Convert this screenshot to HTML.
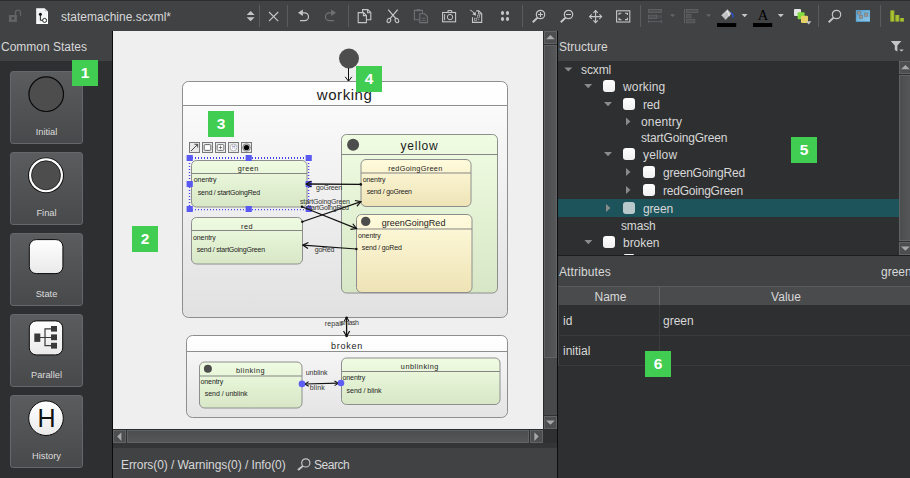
<!DOCTYPE html>
<html lang="en">
<head>
<meta charset="utf-8">
<title>statemachine.scxml</title>
<style>
html,body{margin:0;padding:0;background:#404244;}
body{width:910px;height:478px;overflow:hidden;background:#404244;position:relative;
 font-family:"Liberation Sans",sans-serif;font-size:12px;color:#d8d8d8;}
.abs{position:absolute;}
.t{position:absolute;white-space:pre;line-height:16px;height:16px;}
/* panels */
#topline{left:0;top:0;width:910px;height:1px;background:#2c2d2e;}
#leftbg{left:0;top:61px;width:112px;height:417px;background:#2e2f30;}
#vline1{left:112px;top:31px;width:1px;height:447px;background:#0c0c0c;}
#canvas{left:113px;top:31px;width:430px;height:398px;background:#efefef;}
#cvr{left:543px;top:31px;width:1px;height:413px;background:#2a2b2c;}
#cvb{left:113px;top:429px;width:431px;height:1px;background:#2a2b2c;}
#band{left:113px;top:443px;width:444px;height:5px;background:#343537;}
#corner{left:543px;top:429px;width:14px;height:14px;background:#2f3032;}
#vline2{left:557px;top:31px;width:1px;height:447px;background:#0e0e0e;}
#treebg{left:558px;top:61px;width:352px;height:194px;background:#2e2f30;}
#treeline{left:558px;top:255px;width:352px;height:1px;background:#1c1d1e;}
#attrbg{left:558px;top:305px;width:352px;height:173px;background:#2e2f30;}
#thead{left:558px;top:286px;width:352px;height:19px;background:#4a4b4d;border-top:1px solid #5a5b5d;box-sizing:border-box;}
/* scrollbars */
.sb{position:absolute;background:#4a4b4d;}
.sbtn{position:absolute;box-sizing:border-box;border:1px solid #626365;background:#4d4e50;}
.sld{position:absolute;box-sizing:border-box;border:1px solid #626365;background:linear-gradient(90deg,#4c4d4f,#565759);}
.sldh{position:absolute;box-sizing:border-box;border:1px solid #626365;background:linear-gradient(180deg,#4c4d4f,#565759);}
.tri{position:absolute;width:0;height:0;}
/* left buttons */
.btn{position:absolute;left:10px;width:73px;height:73px;box-sizing:border-box;border:1px solid #66676a;border-radius:3px;
 background:linear-gradient(180deg,#5b5c5e,#48494b);}
.btn .lbl{position:absolute;left:0;width:71px;text-align:center;top:54px;font-size:9.3px;line-height:12px;color:#dcdcdc;}
.badge{position:absolute;width:26px;height:26px;background:#41cd52;color:#fff;font-weight:bold;font-size:15.5px;line-height:26px;text-align:center;}
/* tree */
.row{position:absolute;left:558px;width:341px;}
.cb{position:absolute;width:12px;height:12px;border-radius:3px;background:linear-gradient(180deg,#ffffff,#f0f0f0);}
.sep{position:absolute;width:1px;top:5px;height:22px;background:#5b5c5e;}
</style>
</head>
<body>
<div class="abs" id="topline"></div>
<div class="abs" id="leftbg"></div>
<div class="abs" id="vline1"></div>
<div class="abs" id="canvas"></div>
<div class="abs" id="cvr"></div>
<div class="abs" id="cvb"></div>
<div class="abs" id="band"></div>
<div class="abs" id="corner"></div>
<div class="abs" id="vline2"></div>
<div class="abs" id="treebg"></div>
<div class="abs" id="treeline"></div>
<div class="abs" id="attrbg"></div>
<div class="abs" id="thead"></div>

<!-- TOOLBAR -->
<div id="toolbar">
<div class="sep" style="left:259px"></div><div class="sep" style="left:287px"></div><div class="sep" style="left:348px"></div>
<div class="sep" style="left:522px"></div><div class="sep" style="left:640px"></div><div class="sep" style="left:818px"></div><div class="sep" style="left:880px"></div>
<div class="t" style="left:61px;top:9px;">statemachine.scxml*</div>
<svg class="abs" style="left:0;top:0" width="910" height="61" viewBox="0 0 910 61">
<!-- lock (dim) -->
<g fill="none" stroke="#636466" stroke-width="1.3"><path d="M15.5 15.4V12.6a2.5 2.5 0 0 1 5 0V15.8"/></g>
<rect x="8.9" y="15" width="8" height="6.9" fill="#636466"/><rect x="11.7" y="17" width="2.4" height="2.7" fill="#404244"/>
<!-- file icon -->
<path d="M36.2 8.2H44.6L48 11.6V23.9H36.2Z" fill="#fdfdfd"/><path d="M37.4 9.6H43.8V12.6H46.8V22.6H37.4Z" fill="#f1f2f4"/><path d="M44.6 8.2V11.6H48Z" fill="#c9c9c9"/>
<path d="M40.4 14.4V20.3H42.6" stroke="#111" stroke-width="0.9" fill="none"/><circle cx="40.4" cy="14.3" r="1.5" fill="#111"/><circle cx="44.6" cy="20.4" r="2" fill="#fff" stroke="#111" stroke-width="0.9"/>
<!-- up/down -->
<path d="M246.6 15.1L250.6 11L254.6 15.1Z" fill="#c6c6c6"/><path d="M246.6 17.2L250.6 21.3L254.6 17.2Z" fill="#c6c6c6"/>
<!-- close X -->
<path d="M269 12L278.2 21.2M278.2 12L269 21.2" stroke="#c6c6c6" stroke-width="1.15" fill="none"/>
<!-- undo -->
<path d="M301.5 12.8H304.6a3.9 3.9 0 0 1 0 7.8H300" stroke="#c6c6c6" stroke-width="1.2" fill="none"/><path d="M302.8 9.6L298 12.8L302.8 16Z" fill="#c6c6c6"/>
<!-- redo (dim) -->
<path d="M332.5 12.8H329.4a3.9 3.9 0 0 0 0 7.8H334" stroke="#707173" stroke-width="1.2" fill="none"/><path d="M331.2 9.6L336 12.8L331.2 16Z" fill="#707173"/>
<!-- copy -->
<g stroke="#c6c6c6" stroke-width="1.1" fill="#404244"><path d="M362.6 9.6H367.8L370.8 12.6V19.8H362.6Z"/><path d="M367.6 9.8V12.8H370.6" fill="none"/><path d="M358.2 12.6H363.6L366.4 15.4V22.6H358.2Z"/><path d="M363.4 12.8V15.6H366.2" fill="none"/></g>
<!-- cut -->
<g stroke="#c6c6c6" stroke-width="1.1" fill="none"><path d="M388.2 9.7L395.9 18.7M397.7 9.7L390 18.7" stroke-width="1.25"/><ellipse cx="388.9" cy="20.6" rx="1.7" ry="2.2" transform="rotate(25 388.9 20.6)"/><ellipse cx="396.9" cy="20.6" rx="1.7" ry="2.2" transform="rotate(-25 396.9 20.6)"/></g>
<!-- paste (dim) -->
<g stroke="#707173" stroke-width="1.1" fill="#404244"><path d="M414.4 10.4H422.4V19.8H414.4Z"/><rect x="416.6" y="9.2" width="3.6" height="2" fill="#707173" stroke="none"/><path d="M419.8 13.8H424.6L427.4 16.6V22.6H419.8Z"/><path d="M421.6 18.2H425.6M421.6 20.4H425.6" fill="none" stroke-width="0.8"/></g>
<!-- camera -->
<g stroke="#c6c6c6" stroke-width="1.1" fill="none"><rect x="442.6" y="12.5" width="13" height="9.3"/><path d="M447.9 12.4V11.4Q447.9 10.5 448.8 10.5H450.9Q451.8 10.5 451.8 11.4V12.4"/><circle cx="450" cy="17.1" r="2.7" stroke-width="1"/><path d="M444.6 14.2V20.2" stroke-width="1"/></g>
<!-- export -->
<g stroke="#c6c6c6" stroke-width="1.1" fill="none"><path d="M476.2 10.9H478.8L481.7 13.8V22.4H472.5V17.2"/><path d="M478.6 11V14H481.6" stroke-width="0.9"/><path d="M470.2 10.2Q473.2 11 474.6 14.4" stroke-width="1"/></g><path d="M472.2 14.2L476 15.8L475.6 11.8Z" fill="#c6c6c6"/>
<g stroke="#c6c6c6" stroke-width="0.7" fill="none" opacity="0.85"><rect x="477.4" y="15.1" width="2.3" height="2.1"/><rect x="474.4" y="18.2" width="2.4" height="2.4"/><path d="M478 19.4H479.4M478.7 18.7V20.1" stroke-width="0.5"/></g>
<!-- four dots -->
<g fill="#c6c6c6"><ellipse cx="502.5" cy="13" rx="1.6" ry="2.1"/><ellipse cx="507.5" cy="13" rx="1.6" ry="2.1"/><ellipse cx="502.5" cy="19" rx="1.6" ry="2.1"/><ellipse cx="507.5" cy="19" rx="1.6" ry="2.1"/></g>
<!-- zoom in -->
<g stroke="#c6c6c6" fill="none"><circle cx="540.5" cy="14.5" r="4.2" stroke-width="1.2"/><path d="M537.6 17.6L532.8 22.2" stroke-width="2"/><path d="M538 14.5H543M540.5 12V17" stroke-width="1.1"/></g>
<!-- zoom out -->
<g stroke="#c6c6c6" fill="none"><circle cx="568.5" cy="14.5" r="4.2" stroke-width="1.2"/><path d="M565.6 17.6L560.8 22.2" stroke-width="2"/><path d="M566 14.5H571" stroke-width="1.1"/></g>
<!-- move -->
<g stroke="#c6c6c6" stroke-width="1.1" fill="none"><path d="M595.6 10.6V22.6M589.6 16.6H601.6"/><path d="M593.4 12.8L595.6 10.6L597.8 12.8M593.4 20.4L595.6 22.6L597.8 20.4M591.8 14.4L589.6 16.6L591.8 18.8M599.4 14.4L601.6 16.6L599.4 18.8"/></g>
<!-- fullscreen -->
<g stroke="#c6c6c6" stroke-width="1.1" fill="none"><rect x="616.6" y="10.8" width="13.2" height="11.2"/><path d="M619 15V13.2H621.4M625 13.2H627.4V15M627.4 17.8V19.6H625M621.4 19.6H619V17.8"/></g>
<!-- dim align icon 1 -->
<g fill="#4f5052" stroke="#626365" stroke-width="0.8"><rect x="648.4" y="9.4" width="13.2" height="3.2"/><rect x="648.4" y="15.2" width="8.2" height="3.2"/></g><rect x="657" y="15" width="5" height="3.6" fill="#4b4c4e"/>
<path d="M648.4 21.6H661.6M648.4 20V23.2M661.6 20V23.2" stroke="#606163" stroke-width="0.9" fill="none"/>
<path d="M670 14.3H675.2L672.6 17Z" fill="#636466"/>
<!-- dim align icon 2 -->
<path d="M684.5 9V23.2" stroke="#606163" stroke-width="1"/><g fill="#4f5052" stroke="#626365" stroke-width="0.8"><rect x="686.4" y="9.4" width="11.4" height="3.2"/><rect x="686.4" y="14.6" width="4.6" height="3.2"/><rect x="686.4" y="19.6" width="8.4" height="3.2"/></g>
<path d="M706 14.3H711.2L708.6 17Z" fill="#636466"/>
<!-- paint bucket -->
<defs><linearGradient id="gb" x1="0" y1="0" x2="1" y2="1"><stop offset="0" stop-color="#f4f4f4"/><stop offset="0.5" stop-color="#bdbdbd"/><stop offset="1" stop-color="#e6e6e6"/></linearGradient></defs>
<path d="M721.4 15.2L727.4 9.4L731.6 13.6L725.6 19.8Z" fill="url(#gb)" stroke="#8a8a8a" stroke-width="0.5"/><path d="M727.2 10.6L729.4 16.2" stroke="#ffffff" stroke-width="0.9" opacity="0.9"/>
<path d="M731.2 12.2C733.6 13.2 734.4 15.6 733.4 17.8L732 17.6C732.8 15.8 732.2 14 730.4 13.2Z" fill="#2a4fd0"/>
<rect x="717" y="23" width="19.2" height="4" fill="#000"/>
<path d="M741.6 14.1H747.6L744.6 17.3Z" fill="#c6c6c6"/>
<!-- A -->
<text x="763" y="20" font-family="Liberation Serif, serif" font-size="14.5" text-anchor="middle" fill="#000">A</text>
<rect x="753" y="23" width="19.2" height="4" fill="#000"/>
<path d="M777.8 14.1H783.8L780.8 17.3Z" fill="#c6c6c6"/>
<!-- colored squares -->
<rect x="794" y="9" width="7" height="7" rx="1" fill="#e4e4e4"/><rect x="797.6" y="12.2" width="7" height="7" rx="1" fill="#7fdc3c"/><rect x="801" y="15.8" width="7" height="7.2" rx="1" fill="#e6d264"/>
<path d="M806 21.2H811.4L808.7 24.4Z" fill="#c6c6c6"/>
<!-- magnifier -->
<g stroke="#c6c6c6" fill="none"><circle cx="836.5" cy="14.5" r="4.2" stroke-width="1.2"/><path d="M833.6 17.6L828.7 22.3" stroke-width="2"/></g>
<!-- blue picture icon -->
<defs><linearGradient id="gbl" x1="0" y1="0" x2="1" y2="1"><stop offset="0" stop-color="#5aa5d4"/><stop offset="1" stop-color="#8ec7e6"/></linearGradient></defs><rect x="855.8" y="10" width="14.2" height="11.9" fill="#4e9acb"/><rect x="856.4" y="10.4" width="13.4" height="10.8" fill="url(#gbl)"/>
<g fill="#9c9794" stroke="#6f7175" stroke-width="0.5"><rect x="857.7" y="11.3" width="3.2" height="2.8"/><rect x="864.7" y="13" width="3.2" height="3.2"/><rect x="859.4" y="15.4" width="3.3" height="3.2"/></g>
<!-- green bars -->
<defs><linearGradient id="gg" x1="0" y1="0" x2="1" y2="0"><stop offset="0" stop-color="#8aa21e"/><stop offset="0.5" stop-color="#b1c83a"/><stop offset="1" stop-color="#8fa724"/></linearGradient></defs>
<rect x="890.2" y="10.4" width="4.2" height="11.2" fill="url(#gg)"/><rect x="895.2" y="15" width="4.2" height="6.6" fill="url(#gg)"/><rect x="900" y="18" width="4" height="3.6" fill="url(#gg)"/>
<!-- filter -->
<path d="M890.8 41H901.4L897.4 45.6V51.4L894.8 50V45.6Z" fill="#c6c6c6"/><path d="M899.2 49.4H903.8L901.5 51.6Z" fill="#c6c6c6"/>
</svg>
</div>

<!-- LEFT PANEL -->
<div class="t" style="left:1px;top:39px;">Common States</div>
<div id="leftpanel">
<div class="btn" style="top:71px;">
 <svg class="abs" style="left:-1px;top:-1px" width="73" height="73" viewBox="0 0 73 73"><circle cx="36.2" cy="23.2" r="17.3" fill="#4d4d4d" stroke="#0a0a0a" stroke-width="1.2"/></svg>
 <div class="lbl">Initial</div></div>
<div class="btn" style="top:152px;">
 <svg class="abs" style="left:-1px;top:-1px" width="73" height="73" viewBox="0 0 73 73"><circle cx="36" cy="23.3" r="17.9" fill="#0a0a0a"/><circle cx="36" cy="23.3" r="17" fill="#ffffff"/><circle cx="36" cy="23.3" r="14.5" fill="#4d4d4d" stroke="#151515" stroke-width="0.8"/></svg>
 <div class="lbl">Final</div></div>
<div class="btn" style="top:233px;">
 <svg class="abs" style="left:-1px;top:-1px" width="73" height="73" viewBox="0 0 73 73"><defs><linearGradient id="gw" x1="0" y1="0" x2="0" y2="1"><stop offset="0" stop-color="#ffffff"/><stop offset="1" stop-color="#e9e9e9"/></linearGradient></defs><rect x="19.3" y="6.6" width="33.6" height="34" rx="7" ry="7" fill="url(#gw)" stroke="#0a0a0a" stroke-width="1"/></svg>
 <div class="lbl">State</div></div>
<div class="btn" style="top:314px;">
 <svg class="abs" style="left:-1px;top:-1px" width="73" height="73" viewBox="0 0 73 73"><rect x="19.3" y="6.9" width="33.4" height="34" rx="7" ry="7" fill="url(#gw)" stroke="#0a0a0a" stroke-width="1"/>
 <g fill="#3a3a3a"><rect x="24.3" y="19.5" width="6" height="8.4"/><rect x="41" y="12" width="6" height="5.6"/><rect x="41" y="20.4" width="6" height="5.8"/><rect x="41" y="28.8" width="6" height="5.8"/></g>
 <path d="M30 23.5H41M35 14.8H41M35 31.7H41M35 14.3V32.2" stroke="#3a3a3a" stroke-width="1.2" fill="none"/></svg>
 <div class="lbl">Parallel</div></div>
<div class="btn" style="top:395px;">
 <svg class="abs" style="left:-1px;top:-1px" width="73" height="73" viewBox="0 0 73 73"><circle cx="36" cy="23.2" r="17.3" fill="url(#gw)" stroke="#0a0a0a" stroke-width="1"/><text x="36.5" y="32.2" font-family="Liberation Sans, sans-serif" font-size="25" text-anchor="middle" fill="#111">H</text></svg>
 <div class="lbl">History</div></div>
<div class="badge" style="left:72px;top:60px;">1</div>
</div>

<!-- CANVAS SVG -->
<div id="diagram"><svg class="abs" style="left:113px;top:31px" width="430" height="398" viewBox="113 31 430 398" font-family="Liberation Sans, sans-serif" fill="#1c1c1c">
<defs>
<linearGradient id="fw" x1="0" y1="0" x2="0" y2="1"><stop offset="0" stop-color="#ffffff"/><stop offset="0.1" stop-color="#fdfdfd"/><stop offset="0.11" stop-color="#fafafa"/><stop offset="1" stop-color="#e1e1e1"/></linearGradient>
<linearGradient id="fw2" x1="0" y1="0" x2="0" y2="1"><stop offset="0" stop-color="#ffffff"/><stop offset="0.19" stop-color="#fcfcfc"/><stop offset="0.2" stop-color="#f6f6f6"/><stop offset="1" stop-color="#e4e4e4"/></linearGradient>
<linearGradient id="fg" x1="0" y1="0" x2="0" y2="1"><stop offset="0" stop-color="#f0fce2"/><stop offset="1" stop-color="#d7e7c6"/></linearGradient>
<linearGradient id="fy" x1="0" y1="0" x2="0" y2="1"><stop offset="0" stop-color="#fffbdc"/><stop offset="1" stop-color="#eee3b6"/></linearGradient>
<marker id="ahs" viewBox="0 0 10 10" refX="9" refY="5" markerWidth="6.5" markerHeight="6.5" orient="auto-start-reverse" markerUnits="userSpaceOnUse"><path d="M3 1.4L9 5L3 8.6" fill="none" stroke="#111" stroke-width="1.6"/></marker>
<marker id="ah" viewBox="0 0 10 10" refX="9" refY="5" markerWidth="9" markerHeight="9" orient="auto-start-reverse" markerUnits="userSpaceOnUse"><path d="M3 1.6L9 5L3 8.4" fill="none" stroke="#111" stroke-width="1.3"/></marker>
</defs>
<circle cx="349" cy="58.5" r="10" fill="#4d4d4d"/><path d="M348.5 68V81" stroke="#111" stroke-width="1" fill="none"/><path d="M345.2 76.8L348.5 81.2L351.8 76.8" stroke="#111" stroke-width="1" fill="none"/><rect x="182.5" y="81.5" width="325" height="236" rx="6" ry="6" fill="url(#fw)" stroke="#8e8e8e"/><path d="M182.5 105.5H507.5" stroke="#8e8e8e"/><text x="316.8" y="99.7" font-size="15" textLength="55" lengthAdjust="spacing">working</text><rect x="186.5" y="335.5" width="321" height="82" rx="6" ry="6" fill="url(#fw2)" stroke="#8e8e8e"/><path d="M186.5 351.5H507.5" stroke="#8e8e8e"/><text x="330.9" y="348.6" font-size="9" textLength="31.3" lengthAdjust="spacing">broken</text><rect x="341.5" y="134.5" width="156.0" height="158.5" rx="5" ry="5" fill="url(#fg)" stroke="#8e8e8e" stroke-width="1"/><path d="M341.5 154.5H497.5" stroke="#858585" stroke-width="1"/><text x="400.6" y="149.8" font-size="12" textLength="37" lengthAdjust="spacing">yellow</text><circle cx="353.1" cy="144.8" r="6" fill="#4d4d4d"/><rect x="361" y="159.5" width="110" height="47.0" rx="5" ry="5" fill="url(#fy)" stroke="#8e8e8e" stroke-width="1"/><path d="M361 173H471" stroke="#858585" stroke-width="1"/><text x="388.2" y="170.6" font-size="7.3" textLength="54" lengthAdjust="spacing">redGoingGreen</text><text x="362.7" y="181.6" font-size="7" textLength="22.8" lengthAdjust="spacing">onentry</text><text x="366.8" y="193.5" font-size="7" textLength="45.2" lengthAdjust="spacing">send / goGreen</text><rect x="356.5" y="214.5" width="115.5" height="78.0" rx="5" ry="5" fill="url(#fy)" stroke="#8e8e8e" stroke-width="1"/><path d="M356.5 229H472" stroke="#858585" stroke-width="1"/><text x="381.7" y="225.5" font-size="9" textLength="63.7" lengthAdjust="spacing">greenGoingRed</text><circle cx="365.7" cy="221.4" r="4.7" fill="#4d4d4d"/><text x="358" y="237.7" font-size="7" textLength="22.8" lengthAdjust="spacing">onentry</text><text x="361.8" y="249.5" font-size="7" textLength="40" lengthAdjust="spacing">send / goRed</text><rect x="191.5" y="160.5" width="115.5" height="46.5" rx="5" ry="5" fill="url(#fg)" stroke="#8e8e8e" stroke-width="1"/><path d="M191.5 173.5H307" stroke="#858585" stroke-width="1"/><text x="237.7" y="170.7" font-size="7.3" textLength="20.7" lengthAdjust="spacing">green</text><text x="193.8" y="181.6" font-size="7" textLength="22.8" lengthAdjust="spacing">onentry</text><text x="197.7" y="194.8" font-size="7" textLength="62.5" lengthAdjust="spacing">send / startGoingRed</text><rect x="191.5" y="217.5" width="111.0" height="46.5" rx="5" ry="5" fill="url(#fg)" stroke="#8e8e8e" stroke-width="1"/><path d="M191.5 230.5H302.5" stroke="#858585" stroke-width="1"/><text x="241" y="228.6" font-size="7.3" textLength="11.6" lengthAdjust="spacing">red</text><text x="193" y="239.5" font-size="7" textLength="22.8" lengthAdjust="spacing">onentry</text><text x="196.8" y="251.8" font-size="7" textLength="68.3" lengthAdjust="spacing">send / startGoingGreen</text><rect x="199.5" y="362" width="102.5" height="46" rx="5" ry="5" fill="url(#fg)" stroke="#8e8e8e" stroke-width="1"/><path d="M199.5 376H302" stroke="#858585" stroke-width="1"/><text x="236" y="372.8" font-size="7.3" textLength="28.6" lengthAdjust="spacing">blinking</text><circle cx="207.9" cy="368.8" r="4" fill="#4d4d4d"/><text x="200.5" y="383.9" font-size="7" textLength="22.8" lengthAdjust="spacing">onentry</text><text x="204.8" y="395.6" font-size="7" textLength="42.7" lengthAdjust="spacing">send / unblink</text><rect x="341.5" y="358" width="158.5" height="46.5" rx="5" ry="5" fill="url(#fg)" stroke="#8e8e8e" stroke-width="1"/><path d="M341.5 371.5H500" stroke="#858585" stroke-width="1"/><text x="400.8" y="368.9" font-size="7.3" textLength="37.6" lengthAdjust="spacing">unblinking</text><text x="342.5" y="379.8" font-size="7" textLength="22.8" lengthAdjust="spacing">onentry</text><text x="346.6" y="392.6" font-size="7" textLength="35" lengthAdjust="spacing">send / blink</text><path d="M189 158H309" stroke="#4343ee" stroke-dasharray="1 2" fill="none" stroke-width="1.8"/><path d="M189 209.6H309" stroke="#4343ee" stroke-dasharray="1 2" fill="none" stroke-width="1.2"/><path d="M189.5 157V210" stroke="#4343ee" stroke-dasharray="1 2" fill="none" stroke-width="1.4"/><path d="M308.6 157V210" stroke="#4343ee" stroke-dasharray="1 2" fill="none" stroke-width="1.4"/><rect x="186.6" y="155" width="6.2" height="6" fill="#5a5af2"/><rect x="245.6" y="155" width="6.2" height="6" fill="#5a5af2"/><rect x="305.6" y="155" width="6.2" height="6" fill="#5a5af2"/><rect x="186.6" y="181" width="6.2" height="6" fill="#5a5af2"/><rect x="305.6" y="181" width="6.2" height="6" fill="#5a5af2"/><rect x="186.6" y="206" width="6.2" height="6" fill="#5a5af2"/><rect x="245.6" y="206" width="6.2" height="6" fill="#5a5af2"/><rect x="305.6" y="206" width="6.2" height="6" fill="#5a5af2"/><rect x="189.5" y="142.5" width="10" height="10" fill="#e9e9e9" stroke="#787878" stroke-width="1"/><rect x="202.5" y="142.5" width="10" height="10" fill="#e9e9e9" stroke="#787878" stroke-width="1"/><rect x="215.5" y="142.5" width="10" height="10" fill="#e9e9e9" stroke="#787878" stroke-width="1"/><rect x="228.5" y="142.5" width="10" height="10" fill="#e9e9e9" stroke="#787878" stroke-width="1"/><rect x="241.5" y="142.5" width="10" height="10" fill="#e9e9e9" stroke="#787878" stroke-width="1"/><path d="M191 151L197.5 144.5M194.5 144.3H197.7V147.5" stroke="#222" stroke-width="0.8" fill="none"/><rect x="204.2" y="144.6" width="6.6" height="5.8" rx="1" fill="#fff" stroke="#444" stroke-width="0.8"/><rect x="217.2" y="144.6" width="6.6" height="5.8" rx="1" fill="#fff" stroke="#555" stroke-width="0.8"/><path d="M218.8 147.5H222.2M220.5 145.8V149.2" stroke="#555" stroke-width="0.7"/><circle cx="233.5" cy="147.5" r="3.4" fill="#fff" stroke="#999" stroke-width="0.7"/><text x="233.5" y="149.1" font-size="4.5" text-anchor="middle" fill="#6a78a8">H</text><circle cx="246.5" cy="147.5" r="3.8" fill="#b5b5b5" stroke="#777" stroke-width="0.7"/><circle cx="246.5" cy="147.5" r="2.6" fill="#000"/><path d="M360.8 184.4L306 184" stroke="#111" fill="none" stroke-width="1.3" marker-end="url(#ah)"/><circle cx="360.8" cy="184.4" r="1.3" fill="#111"/><path d="M302.3 221.7L361 201.6" stroke="#111" fill="none" stroke-width="1.2" marker-end="url(#ah)"/><circle cx="302.3" cy="221.7" r="1.2" fill="#111"/><path d="M302 206.8L356.6 228.6" stroke="#111" fill="none" stroke-width="1.2" marker-end="url(#ah)"/><circle cx="302" cy="206.8" r="1.2" fill="#111"/><path d="M356.4 249L302.8 245.1" stroke="#111" fill="none" stroke-width="1.2" marker-end="url(#ah)"/><circle cx="356.4" cy="249" r="1.2" fill="#111"/><path d="M346.6 317.2V336.4" stroke="#111" fill="none" stroke-width="1.3" marker-end="url(#ah)" marker-start="url(#ahs)"/><circle cx="346.6" cy="317.6" r="1.2" fill="#111"/><circle cx="346.6" cy="336" r="1.2" fill="#111"/><path d="M304.8 384L338.4 383.2" stroke="#111" fill="none" stroke-width="1.2" marker-end="url(#ahs)" marker-start="url(#ahs)"/><circle cx="302" cy="383.9" r="3.3" fill="#5e5ef4"/><circle cx="341" cy="383" r="3.3" fill="#5e5ef4"/><text x="316" y="190" font-size="7" textLength="26.2" lengthAdjust="spacing" fill="#333">goGreen</text><text x="300" y="203.7" font-size="7" textLength="50" lengthAdjust="spacing" fill="#333">startGoingGreen</text><text x="306" y="209.9" font-size="7" textLength="43" lengthAdjust="spacing" fill="#333">startGoingRed</text><text x="314.8" y="252.4" font-size="7" textLength="19.5" lengthAdjust="spacing" fill="#333">goRed</text><text x="324.8" y="326" font-size="7" textLength="18.4" lengthAdjust="spacing" fill="#333">repair</text><text x="340.2" y="324.8" font-size="7" textLength="18.8" lengthAdjust="spacing" fill="#333">smash</text><text x="305.8" y="374.5" font-size="7" textLength="21.7" lengthAdjust="spacing" fill="#333">unblink</text><text x="309.8" y="389.5" font-size="7" textLength="14.9" lengthAdjust="spacing" fill="#333">blink</text></svg>
<div class="badge" style="left:132px;top:226px;">2</div><div class="badge" style="left:208px;top:111px;">3</div><div class="badge" style="left:356px;top:66px;">4</div></div><!--/diagram-->

<!-- SCROLLBARS -->
<div id="scrollbars">
<!-- canvas vertical -->
<div class="sb" style="left:544px;top:31px;width:13px;height:398px;background:#48494b"></div>
<div class="abs" style="left:544px;top:44px;width:13px;height:1px;background:#303132"></div>
<div class="sbtn" style="left:544px;top:31px;width:13px;height:13px"></div>
<div class="sld" style="left:544px;top:45px;width:13px;height:313px"></div>
<div class="abs" style="left:544px;top:415px;width:13px;height:1px;background:#303132"></div>
<div class="sbtn" style="left:544px;top:416px;width:13px;height:13px"></div>
<div class="abs" style="left:544px;top:429px;width:13px;height:1px;background:#2a2b2c"></div>
<!-- canvas horizontal -->
<div class="sb" style="left:113px;top:430px;width:430px;height:13px;background:#48494b"></div>
<div class="abs" style="left:126px;top:430px;width:1px;height:13px;background:#303132"></div>
<div class="sbtn" style="left:113px;top:430px;width:13px;height:13px"></div>
<div class="sldh" style="left:127px;top:430px;width:402px;height:13px"></div>
<div class="abs" style="left:529px;top:430px;width:1px;height:13px;background:#303132"></div>
<div class="sbtn" style="left:530px;top:430px;width:13px;height:13px"></div>
<!-- tree vertical -->
<div class="sb" style="left:899px;top:61px;width:11px;height:194px;background:#48494b"></div>
<div class="abs" style="left:899px;top:74px;width:11px;height:1px;background:#303132"></div>
<div class="sbtn" style="left:899px;top:61px;width:13px;height:13px"></div>
<div class="sld" style="left:899px;top:75px;width:13px;height:166px"></div>
<div class="abs" style="left:899px;top:241px;width:11px;height:1px;background:#303132"></div>
<div class="sbtn" style="left:899px;top:242px;width:13px;height:13px"></div>
<svg class="abs" style="left:0;top:0;pointer-events:none" width="910" height="478" viewBox="0 0 910 478">
<g fill="#a9a9a9">
<path d="M546 39.2L550.4 35L554.8 39.2Z"/><path d="M546 420.6L550.4 424.8L554.8 420.6Z"/>
<path d="M121.4 432.2L117.2 436.6L121.4 441Z"/><path d="M534.4 432.2L538.6 436.6L534.4 441Z"/>
<path d="M901 69.2L905.4 65L909.8 69.2Z"/><path d="M901 246.6L905.4 250.8L909.8 246.6Z"/>
</g></svg>
</div>

<!-- BOTTOM BAR -->
<div class="t" style="left:121px;top:457px;letter-spacing:-0.07px;">Errors(0) / Warnings(0) / Info(0)</div>
<svg class="abs" style="left:295px;top:455px" width="18" height="18" viewBox="295 455 18 18"><g stroke="#c6c6c6" fill="none"><circle cx="305.8" cy="462.9" r="4.1" stroke-width="1.2"/><path d="M302.8 465.9L298 470" stroke-width="2"/></g></svg>
<div class="t" style="left:314px;top:457px;letter-spacing:-0.45px;">Search</div>

<!-- RIGHT PANEL -->
<div class="t" style="left:559px;top:39px;">Structure</div>
<div id="tree">
<div class="abs" style="left:558px;top:199px;width:341px;height:18px;background:#1d545c"></div>
<div class="t" style="left:581px;top:62px;letter-spacing:-0.1px;">scxml</div>
<div class="t" style="left:623px;top:79px;letter-spacing:0.15px;">working</div>
<div class="cb" style="left:603px;top:80px"></div>
<div class="t" style="left:643px;top:97px;letter-spacing:-0.15px;">red</div>
<div class="cb" style="left:623px;top:98px"></div>
<div class="t" style="left:641px;top:114px;letter-spacing:0.15px;">onentry</div>
<div class="t" style="left:641px;top:130px;letter-spacing:-0.17px;">startGoingGreen</div>
<div class="t" style="left:643px;top:147px;letter-spacing:0.15px;">yellow</div>
<div class="cb" style="left:623px;top:148px"></div>
<div class="t" style="left:663px;top:165px;letter-spacing:-0.22px;">greenGoingRed</div>
<div class="cb" style="left:643px;top:166px"></div>
<div class="t" style="left:663px;top:183px;letter-spacing:-0.22px;">redGoingGreen</div>
<div class="cb" style="left:643px;top:184px"></div>
<div class="t" style="left:643px;top:201px;letter-spacing:-0.15px;">green</div>
<div class="cb" style="left:623px;top:202px;background:#b9c9cb"></div>
<div class="t" style="left:621px;top:218px;letter-spacing:-0.15px;">smash</div>
<div class="t" style="left:623px;top:235px;letter-spacing:-0.03px;">broken</div>
<div class="cb" style="left:603px;top:236px"></div>
<div class="cb" style="left:623px;top:254px;height:1px;border-radius:2px 2px 0 0;width:10px;margin-left:1px"></div>
<svg class="abs" style="left:0;top:0;pointer-events:none" width="910" height="478" viewBox="0 0 910 478"><path d="M564.3 67.4H572.3L568.3 71.60000000000001Z" fill="#8b8b8b"/><path d="M584.2 84.0H592.2L588.2 88.2Z" fill="#8b8b8b"/><path d="M604 102.0H612L608 106.2Z" fill="#8b8b8b"/><path d="M626 117.4V125.4L630.4 121.4Z" fill="#8b8b8b"/><path d="M604 152.0H612L608 156.2Z" fill="#8b8b8b"/><path d="M626 168.0V176.0L630.4 172.0Z" fill="#8b8b8b"/><path d="M626 186.0V194.0L630.4 190.0Z" fill="#8b8b8b"/><path d="M606 204.0V212.0L610.4 208.0Z" fill="#8b8b8b"/><path d="M584.4 240.0H592.4L588.4 244.2Z" fill="#8b8b8b"/></svg>
</div>
<div id="attrs">
<div class="t" style="left:559px;top:264px;letter-spacing:0.12px;">Attributes</div>
<div class="t" style="left:881px;top:264px;">green</div>
<div class="abs" style="left:659px;top:287px;width:1px;height:18px;background:#636466"></div>
<div class="t" style="left:560px;width:101px;text-align:center;top:289px;">Name</div>
<div class="t" style="left:661px;width:250px;text-align:center;top:289px;">Value</div>
<div class="abs" style="left:558px;top:305px;width:1px;height:60px;background:#454648"></div>
<div class="abs" style="left:659px;top:305px;width:1px;height:60px;background:#3a3b3d"></div>
<div class="abs" style="left:558px;top:335px;width:352px;height:1px;background:#3a3b3d"></div>
<div class="abs" style="left:558px;top:365px;width:352px;height:1px;background:#3a3b3d"></div>
<div class="t" style="left:563px;top:313px;">id</div>
<div class="t" style="left:663px;top:313px;">green</div>
<div class="t" style="left:563px;top:343px;">initial</div>
<div class="badge" style="left:645px;top:351px;">6</div>
<div class="badge" style="left:791px;top:137px;">5</div>
</div>

</body>
</html>
